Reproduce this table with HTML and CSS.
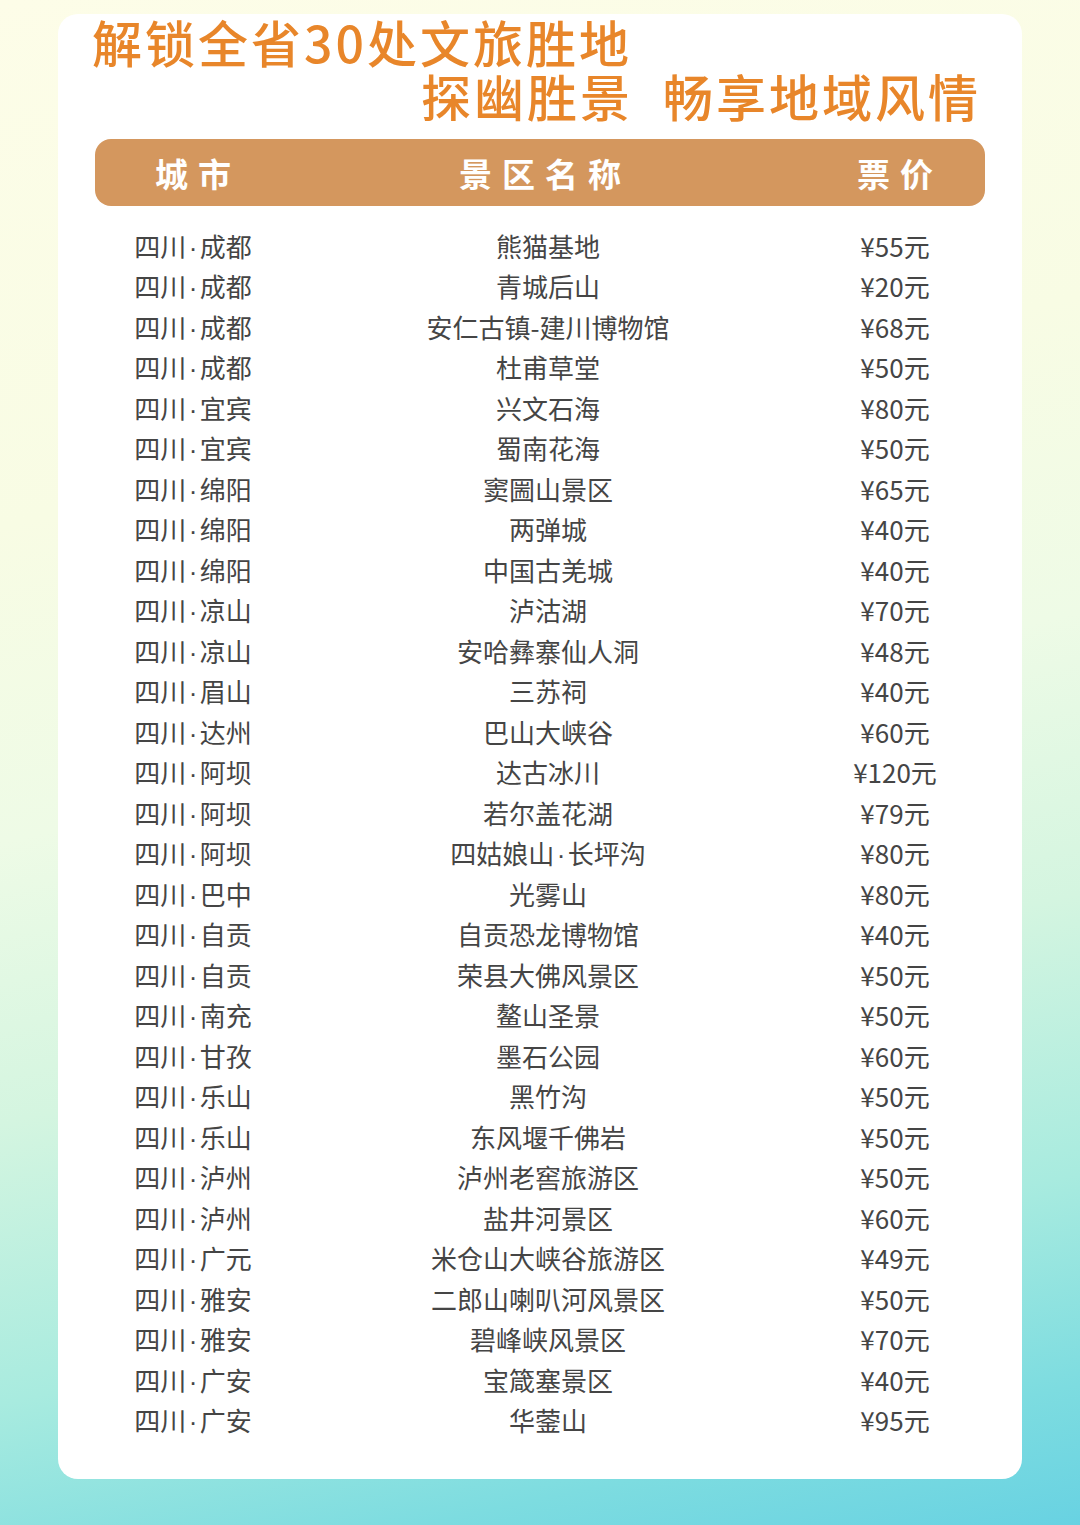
FILE: index.html
```html
<!DOCTYPE html>
<html lang="zh-CN">
<head>
<meta charset="utf-8">
<title>解锁全省30处文旅胜地</title>
<link rel="stylesheet" href="styles.css">
</head>
<body>
<div class="page">
  <div class="card">
    <h1 class="title">
      <span class="line1">解锁全省30处文旅胜地</span>
      <span class="line2">探幽胜景<span class="gap"></span>畅享地域风情</span>
    </h1>
    <div class="table">
      <div class="head">
        <div class="hcell c1">城市</div>
        <div class="hcell c2">景区名称</div>
        <div class="hcell c3">票价</div>
      </div>
      <div class="rows">
        <div class="row"><span>四川<i class="dot">·</i>成都</span><span>熊猫基地</span><span>¥55元</span></div>
        <div class="row"><span>四川<i class="dot">·</i>成都</span><span>青城后山</span><span>¥20元</span></div>
        <div class="row"><span>四川<i class="dot">·</i>成都</span><span>安仁古镇-建川博物馆</span><span>¥68元</span></div>
        <div class="row"><span>四川<i class="dot">·</i>成都</span><span>杜甫草堂</span><span>¥50元</span></div>
        <div class="row"><span>四川<i class="dot">·</i>宜宾</span><span>兴文石海</span><span>¥80元</span></div>
        <div class="row"><span>四川<i class="dot">·</i>宜宾</span><span>蜀南花海</span><span>¥50元</span></div>
        <div class="row"><span>四川<i class="dot">·</i>绵阳</span><span>窦圌山景区</span><span>¥65元</span></div>
        <div class="row"><span>四川<i class="dot">·</i>绵阳</span><span>两弹城</span><span>¥40元</span></div>
        <div class="row"><span>四川<i class="dot">·</i>绵阳</span><span>中国古羌城</span><span>¥40元</span></div>
        <div class="row"><span>四川<i class="dot">·</i>凉山</span><span>泸沽湖</span><span>¥70元</span></div>
        <div class="row"><span>四川<i class="dot">·</i>凉山</span><span>安哈彝寨仙人洞</span><span>¥48元</span></div>
        <div class="row"><span>四川<i class="dot">·</i>眉山</span><span>三苏祠</span><span>¥40元</span></div>
        <div class="row"><span>四川<i class="dot">·</i>达州</span><span>巴山大峡谷</span><span>¥60元</span></div>
        <div class="row"><span>四川<i class="dot">·</i>阿坝</span><span>达古冰川</span><span>¥120元</span></div>
        <div class="row"><span>四川<i class="dot">·</i>阿坝</span><span>若尔盖花湖</span><span>¥79元</span></div>
        <div class="row"><span>四川<i class="dot">·</i>阿坝</span><span>四姑娘山<i class="dot">·</i>长坪沟</span><span>¥80元</span></div>
        <div class="row"><span>四川<i class="dot">·</i>巴中</span><span>光雾山</span><span>¥80元</span></div>
        <div class="row"><span>四川<i class="dot">·</i>自贡</span><span>自贡恐龙博物馆</span><span>¥40元</span></div>
        <div class="row"><span>四川<i class="dot">·</i>自贡</span><span>荣县大佛风景区</span><span>¥50元</span></div>
        <div class="row"><span>四川<i class="dot">·</i>南充</span><span>鳌山圣景</span><span>¥50元</span></div>
        <div class="row"><span>四川<i class="dot">·</i>甘孜</span><span>墨石公园</span><span>¥60元</span></div>
        <div class="row"><span>四川<i class="dot">·</i>乐山</span><span>黑竹沟</span><span>¥50元</span></div>
        <div class="row"><span>四川<i class="dot">·</i>乐山</span><span>东风堰千佛岩</span><span>¥50元</span></div>
        <div class="row"><span>四川<i class="dot">·</i>泸州</span><span>泸州老窖旅游区</span><span>¥50元</span></div>
        <div class="row"><span>四川<i class="dot">·</i>泸州</span><span>盐井河景区</span><span>¥60元</span></div>
        <div class="row"><span>四川<i class="dot">·</i>广元</span><span>米仓山大峡谷旅游区</span><span>¥49元</span></div>
        <div class="row"><span>四川<i class="dot">·</i>雅安</span><span>二郎山喇叭河风景区</span><span>¥50元</span></div>
        <div class="row"><span>四川<i class="dot">·</i>雅安</span><span>碧峰峡风景区</span><span>¥70元</span></div>
        <div class="row"><span>四川<i class="dot">·</i>广安</span><span>宝箴塞景区</span><span>¥40元</span></div>
        <div class="row"><span>四川<i class="dot">·</i>广安</span><span>华蓥山</span><span>¥95元</span></div>
      </div>
    </div>
  </div>
</div>
</body>
</html>
```

FILE: styles.css
```css
html, body {
  margin: 0;
  padding: 0;
}
body {
  width: 1080px;
  height: 1525px;
  overflow: hidden;
  font-family: "Noto Sans CJK SC", "Noto Sans", sans-serif;
  background: linear-gradient(168deg, #fdfde8 0%, #f8fce4 30%, #eefbe6 48%, #d4f5e0 64%, #a8ebdf 80%, #7ddce0 92%, #68d2e2 100%);
}
.page {
  padding: 15px 58px 0 58px;
}
.card {
  background: #ffffff;
  border-radius: 20px;
  height: 1465px;
  box-sizing: border-box;
  padding: 0 37px 0 37px;
}
.title {
  margin: 0;
  font-weight: 500;
  font-size: 50px;
  line-height: 55px;
  color: #e8862a;
  letter-spacing: 3px;
  display: flex;
  flex-direction: column;
  margin-top: -1px;
}
.line1 {
  display: block;
  align-self: flex-start;
  margin-left: -3px;
}
.line2 {
  display: block;
  align-self: flex-end;
  margin-right: 4px;
  margin-top: -1px;
}
.gap {
  display: inline-block;
  width: 30px;
}
.table {
  margin-top: 16px;
}
.head {
  display: grid;
  grid-template-columns: 196px 514px 180px;
  height: 67px;
  align-items: center;
  background: #d4975e;
  border-radius: 16px;
}
.hcell {
  text-align: center;
  color: #ffffff;
  font-weight: 700;
  font-size: 33px;
  letter-spacing: 10px;
  padding-left: 10px;
}
.hcell.c2 {
  padding-left: 0;
  padding-right: 6px;
}
.rows {
  padding-top: 19px;
}
.row {
  display: grid;
  grid-template-columns: 196px 514px 180px;
  height: 40.5px;
  align-items: center;
  font-size: 26px;
  color: #454545;
  text-align: center;
}
.dot {
  font-style: normal;
  font-family: "Liberation Sans", sans-serif;
  margin: 0 2.5px;
}
```
